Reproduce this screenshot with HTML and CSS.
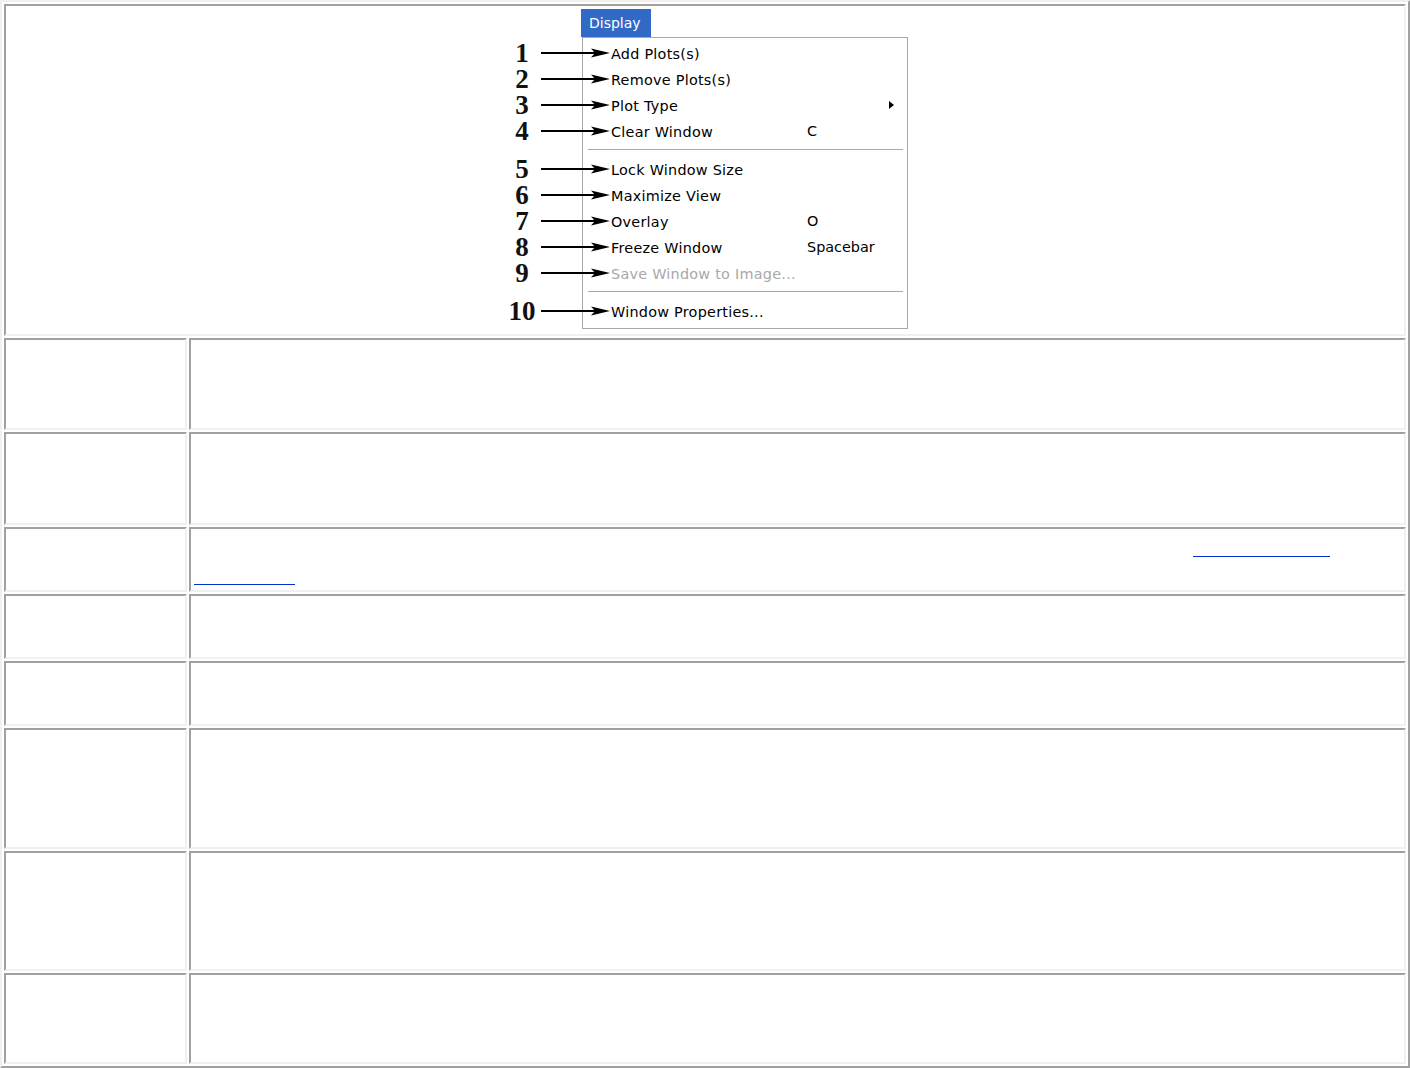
FILE: index.html
```html
<!DOCTYPE html>
<html lang="en">
  <head>
    <meta charset="UTF-8" />
    <meta name="viewport" content="width=device-width, initial-scale=1.0" />
    <title>Display Menu</title>
    <link rel="stylesheet" href="styles.css">
  </head>
  <body>
    <div class="doc-table">
      <div class="cell cell-figure">
        <div class="figure">
          <div class="menu-title">Display</div>
          <div class="menu">
            <div class="menu-item">
              <span class="callout"><span class="callout-num">1</span><svg class="callout-arrow" viewBox="0 0 69 12"><path d="M0 6H54" /><path class="head" d="M50 1.5L69 6L50 10.5L54 6Z" /></svg></span>
              <span class="item-label">Add Plots(s)</span>
            </div>
            <div class="menu-item">
              <span class="callout"><span class="callout-num">2</span><svg class="callout-arrow" viewBox="0 0 69 12"><path d="M0 6H54" /><path class="head" d="M50 1.5L69 6L50 10.5L54 6Z" /></svg></span>
              <span class="item-label">Remove Plots(s)</span>
            </div>
            <div class="menu-item">
              <span class="callout"><span class="callout-num">3</span><svg class="callout-arrow" viewBox="0 0 69 12"><path d="M0 6H54" /><path class="head" d="M50 1.5L69 6L50 10.5L54 6Z" /></svg></span>
              <span class="item-label">Plot Type</span>
              <span class="item-key"></span>
              <span class="submenu"></span>
            </div>
            <div class="menu-item">
              <span class="callout"><span class="callout-num">4</span><svg class="callout-arrow" viewBox="0 0 69 12"><path d="M0 6H54" /><path class="head" d="M50 1.5L69 6L50 10.5L54 6Z" /></svg></span>
              <span class="item-label">Clear Window</span>
              <span class="item-key">C</span>
            </div>
            <div class="menu-sep"></div>
            <div class="menu-item">
              <span class="callout"><span class="callout-num">5</span><svg class="callout-arrow" viewBox="0 0 69 12"><path d="M0 6H54" /><path class="head" d="M50 1.5L69 6L50 10.5L54 6Z" /></svg></span>
              <span class="item-label">Lock Window Size</span>
            </div>
            <div class="menu-item">
              <span class="callout"><span class="callout-num">6</span><svg class="callout-arrow" viewBox="0 0 69 12"><path d="M0 6H54" /><path class="head" d="M50 1.5L69 6L50 10.5L54 6Z" /></svg></span>
              <span class="item-label">Maximize View</span>
            </div>
            <div class="menu-item">
              <span class="callout"><span class="callout-num">7</span><svg class="callout-arrow" viewBox="0 0 69 12"><path d="M0 6H54" /><path class="head" d="M50 1.5L69 6L50 10.5L54 6Z" /></svg></span>
              <span class="item-label">Overlay</span>
              <span class="item-key">O</span>
            </div>
            <div class="menu-item">
              <span class="callout"><span class="callout-num">8</span><svg class="callout-arrow" viewBox="0 0 69 12"><path d="M0 6H54" /><path class="head" d="M50 1.5L69 6L50 10.5L54 6Z" /></svg></span>
              <span class="item-label">Freeze Window</span>
              <span class="item-key">Spacebar</span>
            </div>
            <div class="menu-item disabled">
              <span class="callout"><span class="callout-num">9</span><svg class="callout-arrow" viewBox="0 0 69 12"><path d="M0 6H54" /><path class="head" d="M50 1.5L69 6L50 10.5L54 6Z" /></svg></span>
              <span class="item-label">Save Window to Image...</span>
            </div>
            <div class="menu-sep"></div>
            <div class="menu-item">
              <span class="callout"><span class="callout-num">10</span><svg class="callout-arrow" viewBox="0 0 69 12"><path d="M0 6H54" /><path class="head" d="M50 1.5L69 6L50 10.5L54 6Z" /></svg></span>
              <span class="item-label">Window Properties...</span>
            </div>
          </div>
        </div>
      </div>

      <div class="cell"></div>
      <div class="cell"></div>

      <div class="cell"></div>
      <div class="cell"></div>

      <div class="cell"></div>
      <div class="cell desc">
        <div class="link-line"><a href="#" class="link-stub first" aria-label="link"></a></div>
        <div class="link-line"><a href="#" class="link-stub second" aria-label="link"></a></div>
      </div>

      <div class="cell"></div>
      <div class="cell"></div>

      <div class="cell"></div>
      <div class="cell"></div>

      <div class="cell"></div>
      <div class="cell"></div>

      <div class="cell"></div>
      <div class="cell"></div>

      <div class="cell"></div>
      <div class="cell"></div>
    </div>
  </body>
</html>
```

FILE: styles.css
```css
body {
  margin: 0;
  padding: 0;
  background-color: #fff;
  font-family: "DejaVu Sans", Verdana, sans-serif;
  color: #000;
}

.doc-table {
  display: grid;
  grid-template-columns: 183px 1fr;
  grid-template-rows: 332px 92px 93px 65px 65px 65px 121px 120px 91px;
  gap: 2px;
  padding: 2px;
  width: 1410px;
  box-sizing: border-box;
  border: 2px solid;
  border-color: #f0f0f0 #a0a0a0 #a0a0a0 #f0f0f0;
}

.cell {
  border: 2px solid;
  border-color: #a0a0a0 #f0f0f0 #f0f0f0 #a0a0a0;
  box-sizing: border-box;
}

.cell-figure {
  grid-column: 1 / -1;
  display: flex;
  justify-content: center;
  align-items: flex-start;
}

.figure {
  width: 406px;
  box-sizing: border-box;
  padding-left: 80px;
  margin-top: 3px;
}

.menu-title {
  width: 70px;
  height: 28px;
  margin-left: -1px;
  padding-left: 8px;
  box-sizing: border-box;
  background-color: #3169c6;
  color: #fff;
  font-size: 14px;
  line-height: 28px;
}

.menu {
  width: 326px;
  box-sizing: border-box;
  border: 1px solid #a8a8a8;
  padding: 2px 0 4px 0;
  background-color: #fff;
  font-size: 14.4px;
  letter-spacing: 0.25px;
}

.menu-item {
  position: relative;
  display: grid;
  grid-template-columns: 196px 1fr 18px;
  align-items: center;
  height: 26px;
  padding-left: 28px;
}

.menu-item.disabled {
  color: #a8a8a8;
}

.item-label {
  padding-top: 1px;
}

.item-key {
  white-space: nowrap;
  letter-spacing: 0;
}

.submenu {
  width: 0;
  height: 0;
  border-left: 5px solid #000;
  border-top: 4px solid transparent;
  border-bottom: 4px solid transparent;
}

.menu-sep {
  height: 12px;
  box-sizing: border-box;
  padding-top: 5px;
  margin: 0 4px 0 5px;
}

.menu-sep::before {
  content: "";
  display: block;
  height: 1px;
  background-color: #a8a8a8;
}

/* numbered arrows drawn over the menu edge */
.callout {
  position: absolute;
  left: -80px;
  top: 0;
  height: 26px;
  display: flex;
  align-items: center;
}

.callout-num {
  width: 38px;
  text-align: center;
  font-family: "Liberation Serif", "Times New Roman", serif;
  font-size: 27px;
  font-weight: bold;
  line-height: 26px;
  letter-spacing: 0;
  color: #111;
}

.callout-arrow {
  width: 69px;
  height: 12px;
  display: block;
}

.callout-arrow path {
  stroke: #000;
  stroke-width: 2;
  fill: none;
}

.callout-arrow .head {
  stroke: none;
  fill: #000;
}

.link-line {
  height: 28px;
  display: flex;
  align-items: flex-end;
}

.link-stub {
  display: block;
  border-bottom: 1px solid #0033cc;
}

.link-stub.first {
  width: 137px;
  margin-left: 1002px;
}

.link-stub.second {
  width: 101px;
  margin-left: 3px;
}
```
